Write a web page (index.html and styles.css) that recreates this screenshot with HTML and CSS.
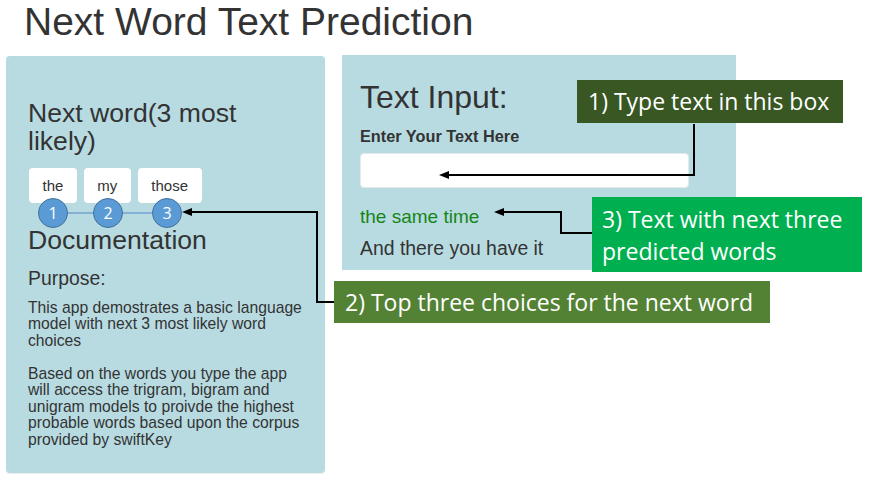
FILE: index.html
```html
<!DOCTYPE html>
<html lang="en">
<head>
<meta charset="utf-8">
<title>Next Word Text Prediction</title>
<link rel="stylesheet" href="styles.css">
</head>
<body>
<div class="page">
  <h1 class="title">Next Word Text Prediction</h1>
  <div class="row">
    <aside class="sidebar">
      <h3 class="heading pred-head">Next word(3 most likely)</h3>
      <div class="choices">
        <button class="choice">the</button>
        <button class="choice">my</button>
        <button class="choice">those</button>
      </div>
      <h3 class="heading doc-head">Documentation</h3>
      <h4 class="purpose">Purpose:</h4>
      <p class="para first">This app demostrates a basic language model with next 3 most likely word choices</p>
      <p class="para">Based on the words you type the app will access the trigram, bigram and unigram models to proivde the highest probable words based upon the corpus provided by swiftKey</p>
    </aside>
    <main class="main">
      <h2 class="input-head">Text Input:</h2>
      <label class="label" for="txt">Enter Your Text Here</label>
      <input class="text-input" id="txt" type="text">
      <div class="predicted">the same time</div>
      <div class="result">And there you have it</div>
    </main>
  </div>

  <svg class="annotations" width="871" height="484" viewBox="0 0 871 484">
    <line x1="53" y1="213" x2="167" y2="213" class="link"/>
    <circle cx="53" cy="213" r="14.5" class="dot"/>
    <circle cx="108" cy="213" r="14.5" class="dot"/>
    <circle cx="167" cy="213" r="14.5" class="dot"/>
    <text x="53" y="219" class="dot-num">1</text>
    <text x="108" y="219" class="dot-num">2</text>
    <text x="167" y="219" class="dot-num">3</text>
    <polyline points="694,124 694,175 447,175" class="arrow"/>
    <polygon points="439,175 449,171 449,179" class="head"/>
    <polyline points="593,233 561,233 561,212 502,212" class="arrow"/>
    <polygon points="494,212 504,208 504,216" class="head"/>
    <polyline points="334,302 317,302 317,212 190,212" class="arrow"/>
    <polygon points="182,212 192,208 192,216" class="head"/>
  </svg>

  <div class="callout callout-1">1) Type text in this box</div>
  <div class="callout callout-3">3) Text with next three<br>predicted words</div>
  <div class="callout callout-2">2) Top three choices for the next word</div>
</div>
</body>
</html>
```

FILE: styles.css
```css
* { box-sizing: border-box; }

html, body {
  margin: 0;
  padding: 0;
  background: #ffffff;
}

.page {
  position: relative;
  width: 871px;
  height: 484px;
  overflow: hidden;
  font-family: "Liberation Sans", Arial, sans-serif;
  color: #333333;
}

.title {
  margin: 0 0 0 24px;
  font-size: 39px;
  line-height: 44px;
  font-weight: normal;
  color: #333333;
}

.row {
  display: flex;
  align-items: flex-start;
  margin-top: 12px;
  padding-left: 6px;
  gap: 17px;
}

.sidebar {
  width: 319px;
  background: #b8dbe2;
  border-radius: 4px;
  box-shadow: 0 1px 1px rgba(0, 0, 0, 0.08);
  padding: 43px 16px 25px 22px;
}

.heading {
  margin: 0;
  font-size: 26.6px;
  line-height: 28px;
  font-weight: normal;
}

.pred-head {
  max-width: 260px;
}

.choices {
  display: flex;
  gap: 7px;
  margin-top: 13px;
  padding-left: 1px;
}

.choice {
  height: 35px;
  padding: 0 13.5px;
  border: none;
  border-radius: 4px;
  background: #ffffff;
  font-family: "Liberation Sans", Arial, sans-serif;
  font-size: 15px;
  color: #333333;
}

.doc-head {
  margin-top: 23px;
}

.purpose {
  margin: 13px 0 0 0;
  font-size: 19.4px;
  line-height: 22px;
  font-weight: normal;
}

.para {
  margin: 16.5px 0 0 0;
  font-size: 15.7px;
  line-height: 16.5px;
}

.para.first {
  margin-top: 10.5px;
}

.main {
  width: 394px;
  margin-top: -1px;
  background: #b8dbe2;
  padding: 25px 18px 11px 18px;
  display: flex;
  flex-direction: column;
  align-items: flex-start;
}

.input-head {
  margin: 0;
  font-size: 32px;
  line-height: 34px;
  font-weight: normal;
}

.label {
  margin-top: 13px;
  font-size: 16.3px;
  line-height: 18px;
  font-weight: bold;
}

.text-input {
  margin-top: 8px;
  width: 329px;
  height: 35px;
  border: 1px solid #e4e9ea;
  border-radius: 4px;
  background: #ffffff;
}

.predicted {
  margin-top: 18px;
  font-size: 19px;
  line-height: 22px;
  color: #168516;
}

.result {
  margin-top: 8.5px;
  font-size: 19.4px;
  line-height: 22px;
}

.annotations {
  position: absolute;
  left: 0;
  top: 0;
  pointer-events: none;
}

.link {
  stroke: #4f86c6;
  stroke-width: 1.2;
}

.dot {
  fill: #5b9bd5;
  stroke: #41719c;
  stroke-width: 1;
}

.dot-num {
  fill: #ffffff;
  font-family: "Open Sans", Lato, sans-serif;
  font-size: 16px;
  text-anchor: middle;
}

.arrow {
  fill: none;
  stroke: #000000;
  stroke-width: 2;
}

.head {
  fill: #000000;
}

.callout {
  position: absolute;
  color: #ffffff;
  font-family: "Open Sans", Lato, sans-serif;
  font-size: 23px;
  line-height: 32px;
  white-space: nowrap;
}

.callout-1 {
  left: 577px;
  top: 80px;
  width: 266px;
  height: 43px;
  padding: 5px 0 0 11px;
  background: #385723;
}

.callout-3 {
  left: 592px;
  top: 197px;
  width: 270px;
  height: 75px;
  padding: 6px 0 0 10px;
  background: #00b050;
}

.callout-2 {
  left: 334px;
  top: 281px;
  width: 436px;
  height: 42px;
  padding: 5px 0 0 11px;
  background: #548235;
}
```
